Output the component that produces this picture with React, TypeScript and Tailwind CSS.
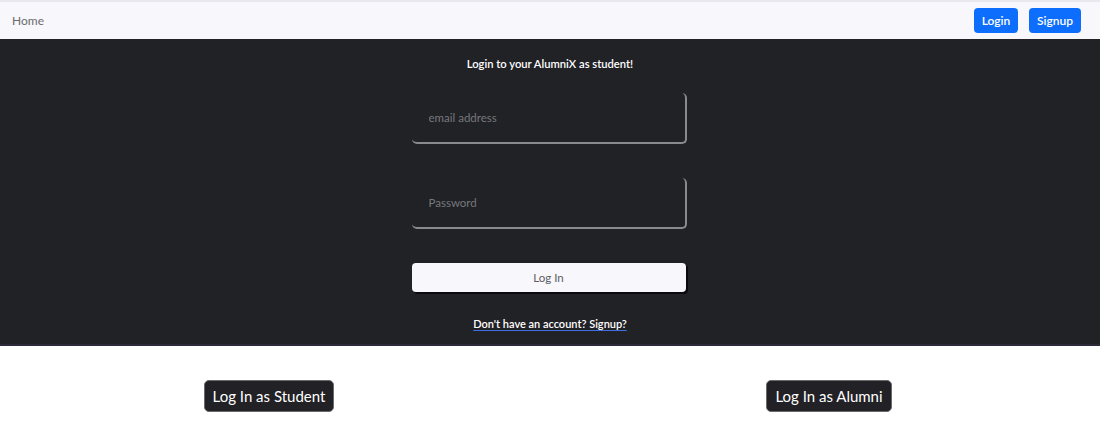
import React from "react";

export default function App() {
  return (
    <div className="w-[1100px] min-h-[446px] bg-white font-['Lato','Noto_Sans',sans-serif]">
      <nav className="h-[39px] bg-[#f8f7fb] border-t-2 border-[#e9e8ee] flex items-center justify-between pl-3 pr-[19px]">
        <a className="text-[12px] text-[#6b6b6b]">Home</a>
        <div className="flex items-center gap-[11px]">
          <button className="h-[25px] w-[44px] rounded-[4px] bg-[#0d6efd] text-white text-[12px] font-semibold">Login</button>
          <button className="h-[25px] w-[52px] rounded-[4px] bg-[#0d6efd] text-white text-[12px] font-semibold">Signup</button>
        </div>
      </nav>

      <section className="h-[307px] bg-[#212226] flex flex-col items-center pt-[16px] border-b-2 border-[#2d2b3a]">
        <h1 className="text-[11.2px] font-semibold text-white leading-[18px]">Login to your AlumniX as student!</h1>
        <form className="w-[275px] flex flex-col mt-[20px] -translate-x-[1px]">
          <input
            placeholder="email address"
            className="h-[51px] rounded-[5px] bg-transparent border-r-2 border-b-2 border-[#8a8a8c] px-[17px] text-[11.5px] text-white placeholder:text-[#77787c] outline-none"
          />
          <input
            type="password"
            placeholder="Password"
            className="mt-[34px] h-[51px] rounded-[5px] bg-transparent border-r-2 border-b-2 border-[#8a8a8c] px-[17px] text-[11.5px] text-white placeholder:text-[#77787c] outline-none"
          />
          <button
            type="button"
            className="mt-[34px] h-[29px] w-[274px] rounded-[4px] bg-[#f8f8fc] text-[11.5px] text-[#5b5b5f] shadow-[2px_2px_0_#0b0b0d]"
          >
            Log In
          </button>
        </form>
        <a className="mt-[24px] text-[11px] font-semibold text-white underline decoration-[#3b6fe0] underline-offset-2">
          Don't have an account? Signup?
        </a>
      </section>

      <div className="grid grid-cols-2 pt-[34px]">
        <div className="flex justify-center pr-[12px]">
          <button className="h-[32px] px-[8px] rounded-[5px] bg-[#212126] border border-[#6b6b6e] text-white text-[15px]">
            Log In as Student
          </button>
        </div>
        <div className="flex justify-center pl-[8px]">
          <button className="h-[32px] px-[8px] rounded-[5px] bg-[#212126] border border-[#6b6b6e] text-white text-[15px]">
            Log In as Alumni
          </button>
        </div>
      </div>
    </div>
  );
}
